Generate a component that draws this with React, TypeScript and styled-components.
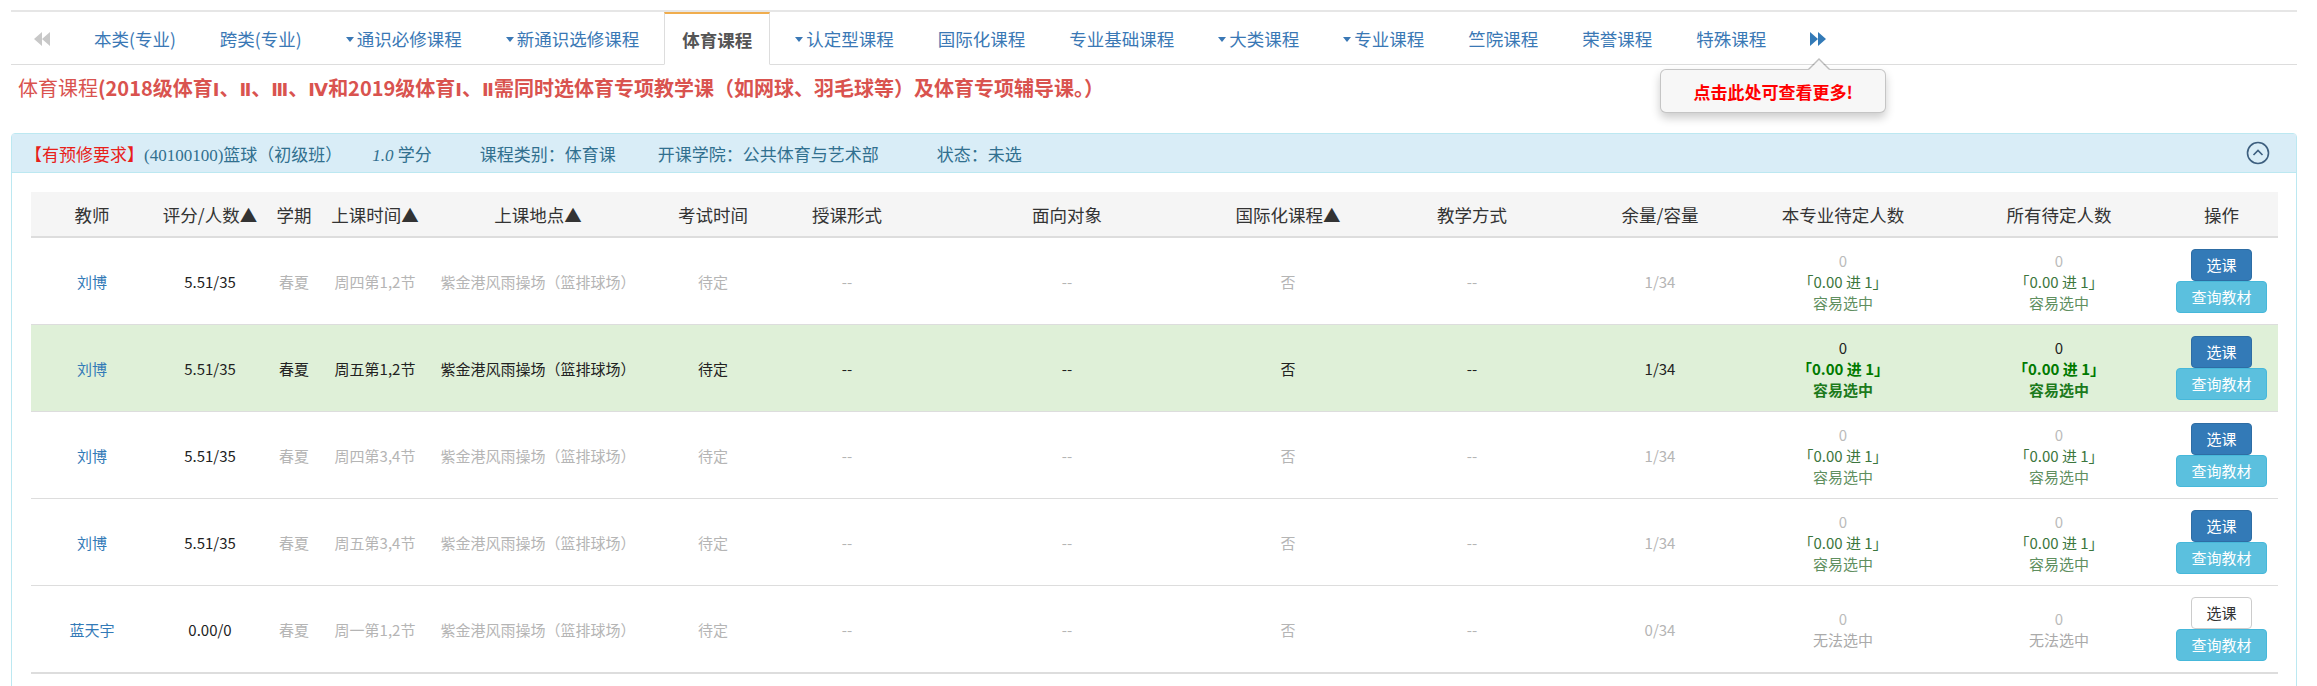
import React from "react";
import styled, { createGlobalStyle, css } from "styled-components";

type Tone = "link" | "strong" | "muted" | "plain";
type Variant = "primary" | "info" | "default";

interface Course {
  teacher: string;
  score: string;
  term: string;
  time: string;
  place: string;
  exam: string;
  form: string;
  target: string;
  intl: string;
  mode: string;
  cap: string;
  pending: string;
  easy: boolean;
  active?: boolean;
}

const GlobalStyle = createGlobalStyle`
  html, body { margin: 0; padding: 0; background: #fff; }
  body {
    font-family: "Noto Sans CJK SC", "Noto Sans", "Liberation Sans", sans-serif;
    color: #333;
  }
`;

const Page = styled.div`
  padding: 10px 20px 0 11px;
`;

// 탭 영역
const TabBar = styled.ul`
  display: flex;
  margin: 0;
  padding: 0 0 0 3px;
  list-style: none;
  height: 52px;
  border-top: 2px solid #e6e6e6;
  border-bottom: 1px solid #ddd;
`;

const Tab = styled.li<{ $active?: boolean }>`
  position: relative;
  display: flex;
  align-items: center;
  padding: 0 19px;
  margin-right: 6px;
  margin-bottom: -1px;
  font-size: 17.5px;
  color: #3a78b5;
  white-space: nowrap;
  ${(p) =>
    p.$active &&
    css`
      padding: 0 17px;
      background: #fff;
      border: 1px solid #ddd;
      border-top: 2px solid #f0ad4e;
      border-bottom-color: #fff;
      color: #555;
      font-weight: bold;
    `}
`;

const Caret = styled.span`
  display: inline-block;
  width: 0;
  height: 0;
  margin-right: 3px;
  border-top: 5px solid currentColor;
  border-left: 4.5px solid transparent;
  border-right: 4.5px solid transparent;
  transform: translateY(1px);
`;

const Popover = styled.div`
  position: absolute;
  left: -131px;
  top: 57px;
  z-index: 5;
  box-sizing: border-box;
  width: 226px;
  height: 44px;
  display: flex;
  align-items: center;
  justify-content: center;
  background: #f7f7f7;
  border: 1px solid rgba(0, 0, 0, 0.2);
  border-radius: 6px;
  box-shadow: 0 5px 10px rgba(0, 0, 0, 0.2);
  color: #f00;
  font-size: 17px;
  font-weight: bold;

  &::before,
  &::after {
    content: "";
    position: absolute;
    left: 147px;
    width: 0;
    height: 0;
    border-left: 11px solid transparent;
    border-right: 11px solid transparent;
  }
  &::before {
    top: -12px;
    border-bottom: 11px solid rgba(0, 0, 0, 0.25);
  }
  &::after {
    top: -10px;
    border-bottom: 11px solid #f7f7f7;
  }
`;

const Title = styled.h4`
  margin: 9px 0 0 7px;
  font-size: 20px;
  line-height: 28px;
  font-weight: normal;
  color: #d9534f;
  white-space: nowrap;

  b {
    font-weight: bold;
  }
`;

const Roman = styled.span`
  font-family: "DejaVu Sans", "Noto Sans", sans-serif;
  font-size: 18px;
  line-height: 1;
`;

// 패널
const Panel = styled.div`
  margin-top: 31px;
  border: 1px solid #bce8f1;
  border-radius: 4px;
`;

const PanelHead = styled.div`
  display: flex;
  align-items: center;
  height: 38px;
  padding: 0 26px 0 13px;
  background: #d9edf7;
  border-bottom: 1px solid #bce8f1;
  font-family: "Liberation Serif", "Noto Sans CJK SC", serif;
  font-size: 17px;
  color: #31708f;
  white-space: nowrap;
`;

const HeadItem = styled.span<{ $ml?: number }>`
  margin-left: ${(p) => p.$ml ?? 0}px;
`;

const Req = styled.span`
  color: #e8201a;
`;

const Collapse = styled.span`
  margin-left: auto;
  display: flex;
`;

const PanelBody = styled.div`
  padding: 19px;
`;

const Table = styled.table`
  width: 100%;
  border-collapse: collapse;
  table-layout: fixed;

  tbody tr:last-child td {
    border-bottom: 2px solid #ddd;
  }
`;

const Col = styled.col<{ $w: number }>`
  width: ${(p) => p.$w}px;
`;

const Th = styled.th`
  height: 44px;
  padding: 0;
  background: #f5f5f5;
  border-bottom: 2px solid #ddd;
  font-size: 17.5px;
  font-weight: normal;
  color: #333;
  text-align: center;
  white-space: nowrap;
`;

const Tr = styled.tr<{ $active?: boolean }>`
  background: ${(p) => (p.$active ? "#dff0d8" : "transparent")};
`;

const toneColor: Record<Tone, string> = {
  link: "#337ab7",
  strong: "#222",
  muted: "#b5b5b5",
  plain: "#222",
};

const Td = styled.td<{ $tone?: Tone }>`
  height: 86px;
  padding: 0;
  border-top: 1px solid #ddd;
  font-size: 15px;
  color: ${(p) => toneColor[p.$tone ?? "plain"]};
  text-align: center;
  vertical-align: middle;
  white-space: nowrap;
`;

const Count = styled.div<{ $active?: boolean }>`
  font-size: 15px;
  line-height: 21px;
  font-weight: ${(p) => (p.$active ? "bold" : "normal")};
`;

const Zero = styled.div<{ $active?: boolean }>`
  color: ${(p) => (p.$active ? "#222" : "#bbb")};
  font-weight: normal;
`;

const Ratio = styled.div<{ $active?: boolean }>`
  color: ${(p) => (p.$active ? "#007a00" : "#3c763d")};
`;

const Hint = styled.div<{ $active?: boolean; $off?: boolean }>`
  color: ${(p) => (p.$off ? "#aaa" : p.$active ? "#1c7a1c" : "#5f8f5f")};
`;

const Actions = styled.div`
  display: flex;
  flex-direction: column;
  align-items: center;
`;

const btnColors: Record<Variant, string> = {
  primary: "background:#337ab7;border-color:#2e6da4;color:#fff;",
  info: "background:#5bc0de;border-color:#46b8da;color:#fff;",
  default: "background:#fff;border-color:#ccc;color:#333;",
};

const Btn = styled.button<{ $variant: Variant }>`
  display: block;
  box-sizing: border-box;
  height: 32px;
  padding: 0 14px;
  font-family: inherit;
  font-size: 15px;
  line-height: 30px;
  border: 1px solid;
  border-radius: 4px;
  ${(p) => btnColors[p.$variant]}
`;

const Backward = () => (
  <svg width="17" height="14" viewBox="0 0 17 14">
    <path d="M9 0 L1 7 L9 14 Z M17 0 L9 7 L17 14 Z" fill="#c8c8c8" />
  </svg>
);

const Forward = () => (
  <svg width="16" height="14" viewBox="0 0 16 14">
    <path d="M0 0 L8 7 L0 14 Z M8 0 L16 7 L8 14 Z" fill="#337ab7" />
  </svg>
);

const tabs: { label: string; caret?: boolean; active?: boolean }[] = [
  { label: "本类(专业)" },
  { label: "跨类(专业)" },
  { label: "通识必修课程", caret: true },
  { label: "新通识选修课程", caret: true },
  { label: "体育课程", active: true },
  { label: "认定型课程", caret: true },
  { label: "国际化课程" },
  { label: "专业基础课程" },
  { label: "大类课程", caret: true },
  { label: "专业课程", caret: true },
  { label: "竺院课程" },
  { label: "荣誉课程" },
  { label: "特殊课程" },
];

const cols = [122, 114, 54, 108, 218, 132, 136, 304, 138, 230, 146, 220, 212, 113];
const heads = [
  "教师",
  "评分/人数▲",
  "学期",
  "上课时间▲",
  "上课地点▲",
  "考试时间",
  "授课形式",
  "面向对象",
  "国际化课程▲",
  "教学方式",
  "余量/容量",
  "本专业待定人数",
  "所有待定人数",
  "操作",
];

const base = {
  term: "春夏",
  place: "紫金港风雨操场（篮排球场）",
  exam: "待定",
  form: "--",
  target: "--",
  intl: "否",
  mode: "--",
  pending: "0",
};

const courses: Course[] = [
  { ...base, teacher: "刘博", score: "5.51/35", time: "周四第1,2节", cap: "1/34", easy: true },
  { ...base, teacher: "刘博", score: "5.51/35", time: "周五第1,2节", cap: "1/34", easy: true, active: true },
  { ...base, teacher: "刘博", score: "5.51/35", time: "周四第3,4节", cap: "1/34", easy: true },
  { ...base, teacher: "刘博", score: "5.51/35", time: "周五第3,4节", cap: "1/34", easy: true },
  { ...base, teacher: "蓝天宇", score: "0.00/0", time: "周一第1,2节", cap: "0/34", easy: false },
];

const PendingCell = ({ c }: { c: Course }) => (
  <Count $active={c.active}>
    <Zero $active={c.active}>{c.pending}</Zero>
    {c.easy ? (
      <>
        <Ratio $active={c.active}>「0.00 进 1」</Ratio>
        <Hint $active={c.active}>容易选中</Hint>
      </>
    ) : (
      <Hint $off>无法选中</Hint>
    )}
  </Count>
);

export default function App() {
  return (
    <Page>
      <GlobalStyle />
      <TabBar>
        <Tab>
          <Backward />
        </Tab>
        {tabs.map((t) => (
          <Tab key={t.label} $active={t.active}>
            {t.caret && <Caret />}
            {t.label}
          </Tab>
        ))}
        <Tab>
          <Forward />
          <Popover>点击此处可查看更多!</Popover>
        </Tab>
      </TabBar>

      <Title>
        体育课程
        <b>
          (2018级体育<Roman>Ⅰ</Roman>、<Roman>Ⅱ</Roman>、<Roman>Ⅲ</Roman>、<Roman>Ⅳ</Roman>和2019级体育
          <Roman>Ⅰ</Roman>、<Roman>Ⅱ</Roman>需同时选体育专项教学课（如网球、羽毛球等）及体育专项辅导课。）
        </b>
      </Title>

      <Panel>
        <PanelHead>
          <Req>【有预修要求】</Req>
          <HeadItem>(40100100)篮球（初级班）</HeadItem>
          <HeadItem $ml={30}>
            <i>1.0</i> 学分
          </HeadItem>
          <HeadItem $ml={48}>课程类别：体育课</HeadItem>
          <HeadItem $ml={42}>开课学院：公共体育与艺术部</HeadItem>
          <HeadItem $ml={58}>状态：未选</HeadItem>
          <Collapse>
            <svg width="24" height="24" viewBox="0 0 24 24">
              <circle cx="12" cy="12" r="10.5" fill="none" stroke="#3d5f7f" strokeWidth="1.6" />
              <polyline points="7.5,14 12,9.5 16.5,14" fill="none" stroke="#3d5f7f" strokeWidth="1.6" />
            </svg>
          </Collapse>
        </PanelHead>

        <PanelBody>
          <Table>
            <colgroup>
              {cols.map((w, i) => (
                <Col key={i} $w={w} />
              ))}
            </colgroup>
            <thead>
              <tr>
                {heads.map((h) => (
                  <Th key={h}>{h}</Th>
                ))}
              </tr>
            </thead>
            <tbody>
              {courses.map((c, i) => {
                const tone: Tone = c.active ? "plain" : "muted";
                return (
                  <Tr key={i} $active={c.active}>
                    <Td $tone="link">{c.teacher}</Td>
                    <Td $tone="strong">{c.score}</Td>
                    <Td $tone={tone}>{c.term}</Td>
                    <Td $tone={tone}>{c.time}</Td>
                    <Td $tone={tone}>{c.place}</Td>
                    <Td $tone={tone}>{c.exam}</Td>
                    <Td $tone={tone}>{c.form}</Td>
                    <Td $tone={tone}>{c.target}</Td>
                    <Td $tone={tone}>{c.intl}</Td>
                    <Td $tone={tone}>{c.mode}</Td>
                    <Td $tone={tone}>{c.cap}</Td>
                    <Td>
                      <PendingCell c={c} />
                    </Td>
                    <Td>
                      <PendingCell c={c} />
                    </Td>
                    <Td>
                      <Actions>
                        <Btn $variant={c.easy ? "primary" : "default"}>选课</Btn>
                        <Btn $variant="info">查询教材</Btn>
                      </Actions>
                    </Td>
                  </Tr>
                );
              })}
            </tbody>
          </Table>
        </PanelBody>
      </Panel>
    </Page>
  );
}
